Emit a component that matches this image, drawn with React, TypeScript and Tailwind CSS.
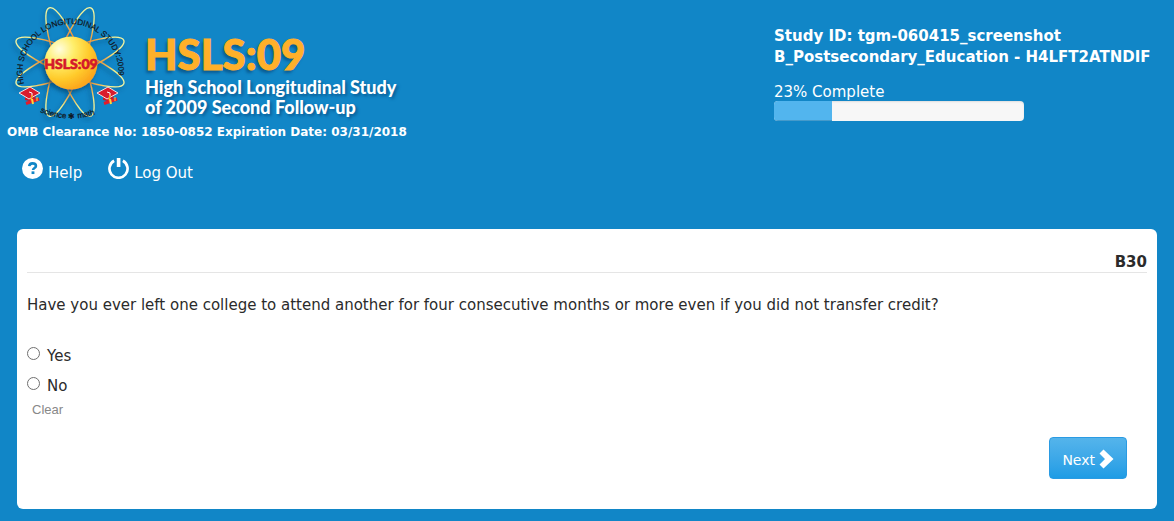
import React from "react";

function Cap() {
  return (
    <g>
      <path d="M6 8 L6 13 L15 15 L17 8 Z" fill="#c81929" />
      <path d="M0 6 L11 0 L21 6 L10 12 Z" fill="#d91c2c" stroke="#f3e4e6" strokeWidth="1" />
      <path d="M10 5 L13 6 L13 9" stroke="#fff" strokeWidth="1" fill="none" />
      <path d="M13 8 L12 14" stroke="#f5a51f" strokeWidth="1.4" />
      <path d="M7 16.5 L20 12" stroke="#e31b2b" strokeWidth="3" />
      <path d="M13 12 L14 17" stroke="#ffd83b" strokeWidth="2" />
      <path d="M18 10 L18 14" stroke="#ffd83b" strokeWidth="1" />
    </g>
  );
}

function AtomLogo() {
  return (
    <svg viewBox="0 0 126 120" className="h-[120px] w-[126px] shrink-0" aria-hidden="true">
      <defs>
        <radialGradient id="orbit" gradientUnits="userSpaceOnUse" cx="63" cy="59" r="58">
          <stop offset="0.4" stopColor="#f58a2c" />
          <stop offset="0.62" stopColor="#f2b04a" />
          <stop offset="0.78" stopColor="#f4f08c" />
          <stop offset="1" stopColor="#f7f6a0" />
        </radialGradient>
        <radialGradient id="core" cx="0.28" cy="0.24" r="0.8">
          <stop offset="0" stopColor="#fffde0" />
          <stop offset="0.35" stopColor="#ffee6a" />
          <stop offset="0.7" stopColor="#ffcb2c" />
          <stop offset="1" stopColor="#fba61c" />
        </radialGradient>
        <filter id="soft" x="-20%" y="-20%" width="150%" height="150%">
          <feDropShadow dx="-2" dy="3" stdDeviation="2" floodColor="#053c66" floodOpacity="0.6" />
        </filter>
        <path id="ring" d="M17 81 A48 48 0 1 1 110 81" />
        <path id="base" d="M33 109 Q60 121 90 111" />
      </defs>
      <g fill="none" stroke="url(#orbit)" strokeWidth="1.3" filter="url(#soft)">
        <ellipse cx="63" cy="59" rx="13" ry="58" transform="rotate(-21 63 59)" />
        <ellipse cx="63" cy="59" rx="13" ry="58" transform="rotate(21 63 59)" />
        <ellipse cx="63" cy="59" rx="13" ry="58" transform="rotate(-68 63 59)" />
        <ellipse cx="63" cy="59" rx="13" ry="58" transform="rotate(68 63 59)" />
      </g>
      <circle cx="64" cy="60" r="26.5" fill="url(#core)" filter="url(#soft)" />
      <g fill="#10181f" stroke="#10181f" className="font-['Liberation_Sans',sans-serif]">
        <text fontSize="8" strokeWidth="0.2">
          <textPath href="#ring">HIGH SCHOOL LONGITUDINAL STUDY:2009</textPath>
        </text>
        <text fontSize="8" strokeWidth="0.2">
          <textPath href="#base">science ✱ math</textPath>
        </text>
      </g>
      <text
        x="64"
        y="66"
        textAnchor="middle"
        fontSize="14"
        fontWeight="900"
        fill="#d3182b"
        stroke="#d3182b"
        strokeWidth="0.7"
        className="font-['Lato',sans-serif]"
      >
        HSLS:09
      </text>
      <g transform="translate(12 84)"><Cap /></g>
      <g transform="translate(90 84)"><Cap /></g>
    </svg>
  );
}

function HelpIcon() {
  return (
    <svg viewBox="0 0 22 22" className="size-[21px]" aria-hidden="true">
      <circle cx="11" cy="11" r="11" fill="#fff" />
      <path d="M7.6 8.6 C7.8 6.4 9 5.6 11 5.6 C13.2 5.6 14.6 6.6 14.6 8.4 C14.6 10.6 11.6 10.4 11.6 12.6" fill="none" stroke="#1186c7" strokeWidth="2.7" />
      <rect x="10" y="14" width="3" height="2.8" fill="#1186c7" />
    </svg>
  );
}

function PowerIcon() {
  return (
    <svg viewBox="0 0 22 22" className="size-[21px]" aria-hidden="true">
      <path d="M6.4 2.9 A9.5 9.5 0 1 0 15.6 2.9" fill="none" stroke="#fff" strokeWidth="2.8" />
      <rect x="9.2" y="0" width="3.8" height="9.4" fill="#fff" />
    </svg>
  );
}

function Choice({ id, label }: { id: string; label: string }) {
  return (
    <div className="flex items-start gap-[7px]">
      <input
        type="radio"
        id={id}
        name="left-college"
        className="mt-px size-[13px] appearance-none rounded-full border border-[#707070] bg-white checked:border-4"
      />
      <label htmlFor={id} className="text-[15px] leading-[20px]">{label}</label>
    </div>
  );
}

export default function App() {
  return (
    <div className="min-h-screen bg-[#1186c7] px-[17px] pb-3 font-['DejaVu_Sans',sans-serif] text-[15px] text-white">
      <header className="flex justify-between">
        <div className="-ml-[10px]">
          <div className="flex h-[123px] items-start gap-3 pt-[3px]">
            <AtomLogo />
            <div className="pt-[29px] font-['Lato',sans-serif] font-black">
              <h1 className="pb-px text-[42px] leading-[44px] text-[#ffb02a] [-webkit-text-stroke:1px_#ffb02a] [text-shadow:-2px_3px_3px_#0a5c94]">
                HSLS:09
              </h1>
              <p className="text-[18px] leading-[20px] [text-shadow:2px_2px_3px_#0a5c94]">
                High School Longitudinal Study
                <br />
                of 2009 Second Follow-up
              </p>
            </div>
          </div>
          <p className="text-[12px] leading-[18px] font-bold">OMB Clearance No: 1850-0852 Expiration Date: 03/31/2018</p>
          <nav className="mt-[17px] flex gap-[26px] pl-[15px]">
            <a href="#help" className="flex gap-[5px] leading-[30px]"><HelpIcon />Help</a>
            <a href="#logout" className="flex gap-[5px] leading-[30px]"><PowerIcon />Log Out</a>
          </nav>
        </div>
        <div className="w-[383px] pt-[26px]">
          <p className="leading-[21px] font-bold">
            Study ID: tgm-060415_screenshot
            <br />
            B_Postsecondary_Education - H4LFT2ATNDIF
          </p>
          <p id="progress" className="mt-[15px] leading-[18px]">23% Complete</p>
          <div
            role="progressbar"
            aria-labelledby="progress"
            aria-valuenow={23}
            aria-valuemin={0}
            aria-valuemax={100}
            className="h-5 w-[250px] overflow-hidden rounded bg-[#f7f7f7] shadow-[inset_0_1px_2px_rgba(0,0,0,0.1)]"
          >
            <div className="h-full w-[23%] bg-[#52b5ee] shadow-[inset_0_-1px_0_rgba(0,0,0,0.15)]" />
          </div>
        </div>
      </header>

      <main className="mt-[41px] rounded-md bg-white px-[10px] pt-6 pb-[30px] text-[#2b2b2b]">
        <h2 className="border-b border-[#e5e5e5] text-right leading-[19px] font-bold">B30</h2>
        <form>
          <fieldset>
            <legend className="pt-[22px] leading-[20px]">
              Have you ever left one college to attend another for four consecutive months or more even if you did not
              transfer credit?
            </legend>
            <div className="mt-[31px] flex flex-col gap-[10px]">
              <Choice id="yes" label="Yes" />
              <Choice id="no" label="No" />
            </div>
          </fieldset>
          <button type="reset" className="mt-[6px] ml-[5px] block font-['Liberation_Sans',sans-serif] text-[13px] leading-[16px] text-[#888]">
            Clear
          </button>
          <div className="mt-[19px] flex justify-end pr-5">
            <button
              type="button"
              className="flex h-[42px] items-center gap-1 rounded border border-[#2a9be3] bg-linear-to-b from-[#54b4eb] to-[#1d9ce5] px-3 pt-[2px] text-[14px] text-white"
            >
              <span className="pt-[3px]">Next</span>
              <svg viewBox="0 0 15 20" className="h-5 w-[15px]" aria-hidden="true">
                <path d="M0.5 4.5 L4.5 0.5 L14.5 10 L4.5 19.5 L0.5 15.5 L6 10 Z" fill="#fff" />
              </svg>
            </button>
          </div>
        </form>
      </main>
    </div>
  );
}
